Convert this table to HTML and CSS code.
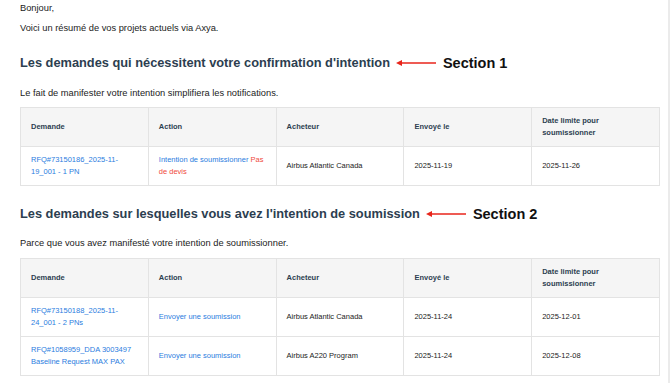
FILE: index.html
```html
<!DOCTYPE html>
<html lang="fr">
<head>
<meta charset="utf-8">
<link rel="stylesheet" href="styles.css">
</head>
<body>
<div class="page">
  <p class="line first">Bonjour,</p>
  <p class="line">Voici un résumé de vos projets actuels via Axya.</p>

  <div class="heading-row">
    <h2 class="heading">Les demandes qui nécessitent votre confirmation d'intention</h2>
    <svg class="arrow" width="40" height="8" viewBox="0 0 40 8"><line x1="3" y1="4" x2="40" y2="4" stroke="#e8251b" stroke-width="1.3"/><polygon points="0,4 6,1 6,7" fill="#e8251b"/></svg>
    <span class="note">Section 1</span>
  </div>
  <p class="line intro">Le fait de manifester votre intention simplifiera les notifications.</p>
  <table class="grid">
    <thead>
      <tr><th>Demande</th><th>Action</th><th>Acheteur</th><th>Envoyé le</th><th>Date limite pour soumissionner</th></tr>
    </thead>
    <tbody>
      <tr>
        <td><a class="link">RFQ#73150186_2025-11-19_001 - 1 PN</a></td>
        <td><span class="link">Intention de soumissionner <span class="red">Pas de devis</span></span></td>
        <td>Airbus Atlantic Canada</td>
        <td>2025-11-19</td>
        <td>2025-11-26</td>
      </tr>
    </tbody>
  </table>

  <div class="heading-row second">
    <h2 class="heading">Les demandes sur lesquelles vous avez l'intention de soumission</h2>
    <svg class="arrow" width="40" height="8" viewBox="0 0 40 8"><line x1="3" y1="4" x2="40" y2="4" stroke="#e8251b" stroke-width="1.3"/><polygon points="0,4 6,1 6,7" fill="#e8251b"/></svg>
    <span class="note">Section 2</span>
  </div>
  <p class="line intro">Parce que vous avez manifesté votre intention de soumissionner.</p>
  <table class="grid">
    <thead>
      <tr><th>Demande</th><th>Action</th><th>Acheteur</th><th>Envoyé le</th><th>Date limite pour soumissionner</th></tr>
    </thead>
    <tbody>
      <tr>
        <td><a class="link">RFQ#73150188_2025-11-24_001 - 2 PNs</a></td>
        <td><a class="link">Envoyer une soumission</a></td>
        <td>Airbus Atlantic Canada</td>
        <td>2025-11-24</td>
        <td>2025-12-01</td>
      </tr>
      <tr>
        <td><a class="link">RFQ#1058959_DDA 3003497 Baseline Request MAX PAX</a></td>
        <td><a class="link">Envoyer une soumission</a></td>
        <td>Airbus A220 Program</td>
        <td>2025-11-24</td>
        <td>2025-12-08</td>
      </tr>
    </tbody>
  </table>
</div>
</body>
</html>
```
FILE: styles.css
```css
html, body {
  margin: 0;
  padding: 0;
  background: #ffffff;
}
body {
  font-family: "Liberation Sans", Arial, sans-serif;
  color: #222;
  border-right: 2px solid #ebebeb;
  min-height: 383px;
  box-sizing: border-box;
}
.page {
  padding: 1px 10px 0 20px;
}
.line {
  margin: 0 0 6px;
  font-size: 9.3px;
  line-height: 14px;
  color: #222;
}
.heading-row {
  display: flex;
  align-items: center;
  margin-top: 19px;
  height: 18px;
}
.heading {
  margin: 0;
  font-size: 12.8px;
  line-height: 18px;
  font-weight: bold;
  color: #2c3e50;
}
.arrow {
  margin-left: 6px;
  flex: none;
}
.note {
  margin-left: 7px;
  font-size: 14.5px;
  font-weight: bold;
  color: #111;
}
.intro {
  margin-top: 14px;
  margin-bottom: 7px;
}
.heading-row.second + .intro {
  margin-top: 13px;
  margin-bottom: 8px;
}
.grid {
  width: 640px;
  table-layout: fixed;
  border-collapse: collapse;
  font-size: 7.5px;
  line-height: 12px;
  color: #222;
}
.grid th, .grid td {
  border: 1px solid #e3e3e3;
  padding: 7px 10px;
  text-align: left;
  vertical-align: middle;
}
.grid th {
  background: #f5f5f5;
  font-weight: bold;
  color: #2c3e50;
}
.link {
  color: #2b7de0;
  text-decoration: none;
}
.red {
  color: #ef4a3c;
}
```
